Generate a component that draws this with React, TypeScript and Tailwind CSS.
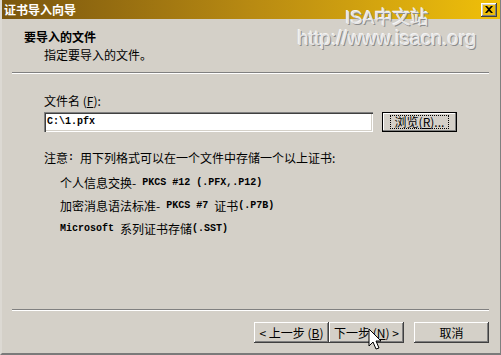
const ITEMS = [
  { cjk: '个人信息交换-', latin: ' PKCS #12 (.PFX,.P12)' },
  { cjk: '加密消息语法标准-', latin: ' PKCS #7 ', tail: '证书', end: '(.P7B)' },
];

const CJK = "font-['Noto_Sans_CJK_SC',sans-serif]";
const MONO = "font-['Liberation_Mono',monospace] text-[10px] font-bold";

const raised =
  'shadow-[inset_-1px_-1px_#404040,inset_1px_1px_#ffffff,inset_-2px_-2px_#808080,inset_2px_2px_#d4d0c8]';

function Btn({ children, className = '' }: { children: React.ReactNode; className?: string }) {
  return (
    <div className={`h-[21px] flex items-center justify-center bg-[#d4d0c8] text-[12px] text-black whitespace-pre ${raised} ${className}`}>
      {children}
    </div>
  );
}

function Cursor() {
  return (
    <svg className="absolute left-[366px] top-[328px]" width="14" height="24" viewBox="0 0 14 24">
      <path
        d="M1 1 L1 18 L5 14 L8 21 L11 20 L8 13 L13 13 Z"
        fill="#fff"
        stroke="#000"
        strokeWidth="1"
        strokeLinejoin="miter"
      />
    </svg>
  );
}

export default function App() {
  return (
    <div className={`relative w-[501px] h-[355px] bg-[#d4d0c8] overflow-hidden ${CJK} border-l-[2px] border-l-[#dcd9d3] border-r border-r-[#808080] border-b-[2px] border-b-[#7a7a7a]`}>
      {/* title bar */}
      <div className="h-[19px] flex items-center justify-between bg-gradient-to-r from-[#7a560e] via-[#b88a12] to-[#f0c008] pl-[2px] pr-[3px]">
        <span className="text-white font-bold text-[12px] leading-none">证书导入向导</span>
        <div className={`w-[16px] h-[14px] flex items-center justify-center ${raised}`}>
          <svg width="8" height="7" viewBox="0 0 8 7">
            <path d="M0 0 L2 0 L4 2 L6 0 L8 0 L5 3.5 L8 7 L6 7 L4 5 L2 7 L0 7 L3 3.5 Z" fill="#000" />
          </svg>
        </div>
      </div>

      {/* header */}
      <div className="pt-[11px] pl-[22px] text-[12px] leading-[14px] text-black">
        <div className="font-bold">要导入的文件</div>
        <div className="pl-[20px] mt-[4px]">指定要导入的文件。</div>
      </div>
      <div className="mt-[10px] ml-[10px] mr-[11px] h-[2px] border-t border-t-[#808080] border-b border-b-white" />

      {/* body */}
      <div className="pl-[42px] text-[12px] leading-[14px] text-black whitespace-pre">
        <div className="mt-[20px]">
          文件名 (<span className="underline">F</span>):
        </div>
        <div className="mt-[4px] flex items-center gap-[9px]">
          <div className="w-[329px] h-[20px] bg-white flex items-center pl-[3px] shadow-[inset_1px_1px_#808080,inset_2px_2px_#404040,inset_-1px_-1px_#ffffff,inset_-2px_-2px_#d4d0c8]">
            <span className={MONO}>C:\1.pfx</span>
          </div>
          <div className="w-[75px] h-[20px] border border-black bg-[#d4d0c8] shadow-[inset_-1px_-1px_#808080,inset_1px_1px_#ffffff] flex items-center justify-center">
            <div className="border border-dotted border-black px-[4px] h-[14px] flex items-center">
              浏览(<span className="underline">R</span>)...
            </div>
          </div>
        </div>

        <div className="mt-[19px] flex items-center">
          <span>注意</span>
          <span className={MONO}>: </span>
          <span>用下列格式可以在一个文件中存储一个以上证书:</span>
        </div>
        <div className="pl-[16px]">
          {ITEMS.map((it) => (
            <div key={it.latin} className="mt-[9px] first:mt-[11px] h-[14px] flex items-center">
              <span>{it.cjk}</span>
              <span className={MONO}>{it.latin}</span>
              {it.tail && <span>{it.tail}</span>}
              {it.end && <span className={MONO}>{it.end}</span>}
            </div>
          ))}
          <div className="mt-[9px] h-[14px] flex items-center">
            <span className={MONO}>Microsoft </span>
            <span>系列证书存储</span>
            <span className={MONO}>(.SST)</span>
          </div>
        </div>
      </div>

      {/* footer */}
      <div className="absolute left-[10px] right-[11px] top-[309px] h-[2px] border-t border-t-[#808080] border-b border-b-white" />
      <div className="absolute top-[322px] left-[252px] flex">
        <Btn className="w-[75px]">&lt; 上一步 (<span className="underline">B</span>)</Btn>
        <Btn className="w-[75px]">下一步 (<span className="underline">N</span>) &gt;</Btn>
        <Btn className="w-[75px] ml-[10px]">取消</Btn>
      </div>

      {/* watermark */}
      <div className="absolute left-[290px] top-[9px] w-[190px] flex flex-col items-center leading-none text-[#e6e6e6] [text-shadow:1px_1px_0_#8c8c8c,-1px_-1px_0_#f4f4f4] font-['Liberation_Sans','Noto_Sans_CJK_SC',sans-serif]">
        <span className="text-[18px]">ISA中文站</span>
        <span className="text-[20px] mt-[1px]">http://www.isacn.org</span>
      </div>

      <Cursor />
    </div>
  );
}
